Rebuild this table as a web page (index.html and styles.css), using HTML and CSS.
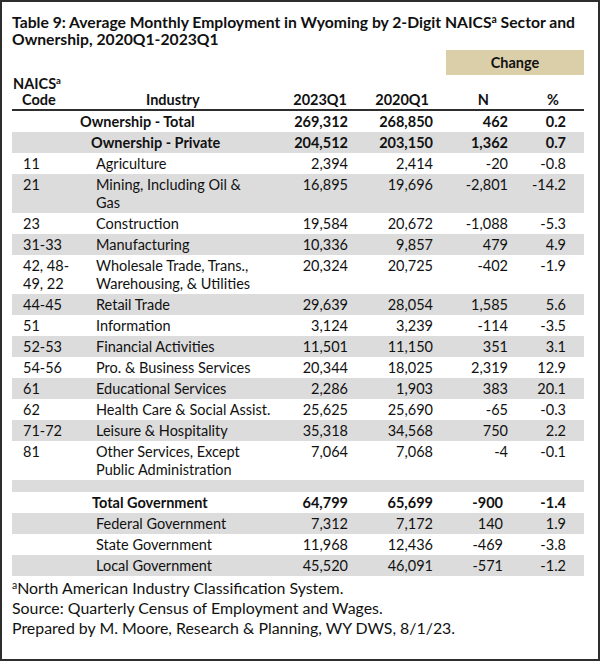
FILE: index.html
```html
<!DOCTYPE html>
<html>
<head>
<meta charset="utf-8">
<link rel="stylesheet" href="styles.css">
</head>
<body>
<div class="frame">
  <h1 class="title">Table 9: Average Monthly Employment in Wyoming by 2-Digit NAICS<sup>a</sup> Sector and<br>Ownership, 2020Q1-2023Q1</h1>
  <div class="change-row"><div class="change">Change</div></div>
  <table class="data">
    <colgroup>
      <col class="c-code"><col class="c-ind"><col class="c-a"><col class="c-b"><col class="c-n"><col class="c-p">
    </colgroup>
    <thead>
      <tr>
        <th class="h-code">NAICS<sup>a</sup><br><span class="h-code2">Code</span></th>
        <th class="h-ind">Industry</th>
        <th class="h-a">2023Q1</th>
        <th class="h-b">2020Q1</th>
        <th class="h-n">N</th>
        <th class="h-p">%</th>
      </tr>
    </thead>
    <tbody>
      <tr class="bold"><td colspan="2" class="own-total">Ownership - Total</td><td class="num">269,312</td><td class="num">268,850</td><td class="num">462</td><td class="num pct">0.2</td></tr>
      <tr class="bold band"><td colspan="2" class="own-private">Ownership - Private</td><td class="num">204,512</td><td class="num">203,150</td><td class="num">1,362</td><td class="num pct">0.7</td></tr>
      <tr><td class="code">11</td><td>Agriculture</td><td class="num">2,394</td><td class="num">2,414</td><td class="num">-20</td><td class="num pct">-0.8</td></tr>
      <tr class="band"><td class="code">21</td><td>Mining, Including Oil &amp;<br>Gas</td><td class="num">16,895</td><td class="num">19,696</td><td class="num">-2,801</td><td class="num pct">-14.2</td></tr>
      <tr><td class="code">23</td><td>Construction</td><td class="num">19,584</td><td class="num">20,672</td><td class="num">-1,088</td><td class="num pct">-5.3</td></tr>
      <tr class="band"><td class="code">31-33</td><td>Manufacturing</td><td class="num">10,336</td><td class="num">9,857</td><td class="num">479</td><td class="num pct">4.9</td></tr>
      <tr><td class="code">42, 48-<br>49, 22</td><td>Wholesale Trade, Trans.,<br>Warehousing, &amp; Utilities</td><td class="num">20,324</td><td class="num">20,725</td><td class="num">-402</td><td class="num pct">-1.9</td></tr>
      <tr class="band"><td class="code">44-45</td><td>Retail Trade</td><td class="num">29,639</td><td class="num">28,054</td><td class="num">1,585</td><td class="num pct">5.6</td></tr>
      <tr><td class="code">51</td><td>Information</td><td class="num">3,124</td><td class="num">3,239</td><td class="num">-114</td><td class="num pct">-3.5</td></tr>
      <tr class="band"><td class="code">52-53</td><td>Financial Activities</td><td class="num">11,501</td><td class="num">11,150</td><td class="num">351</td><td class="num pct">3.1</td></tr>
      <tr><td class="code">54-56</td><td>Pro. &amp; Business Services</td><td class="num">20,344</td><td class="num">18,025</td><td class="num">2,319</td><td class="num pct">12.9</td></tr>
      <tr class="band"><td class="code">61</td><td>Educational Services</td><td class="num">2,286</td><td class="num">1,903</td><td class="num">383</td><td class="num pct">20.1</td></tr>
      <tr><td class="code">62</td><td>Health Care &amp; Social Assist.</td><td class="num">25,625</td><td class="num">25,690</td><td class="num">-65</td><td class="num pct">-0.3</td></tr>
      <tr class="band"><td class="code">71-72</td><td>Leisure &amp; Hospitality</td><td class="num">35,318</td><td class="num">34,568</td><td class="num">750</td><td class="num pct">2.2</td></tr>
      <tr><td class="code">81</td><td>Other Services, Except<br>Public Administration</td><td class="num">7,064</td><td class="num">7,068</td><td class="num">-4</td><td class="num pct">-0.1</td></tr>
      <tr class="band spacer"><td colspan="6"></td></tr>
      <tr class="bold gov"><td colspan="2" class="gov-total">Total Government</td><td class="num">64,799</td><td class="num">65,699</td><td class="num n">-900</td><td class="num pct">-1.4</td></tr>
      <tr class="band gov"><td class="code"></td><td>Federal Government</td><td class="num">7,312</td><td class="num">7,172</td><td class="num n">140</td><td class="num pct">1.9</td></tr>
      <tr class="gov"><td class="code"></td><td>State Government</td><td class="num">11,968</td><td class="num">12,436</td><td class="num n">-469</td><td class="num pct">-3.8</td></tr>
      <tr class="band gov"><td class="code"></td><td>Local Government</td><td class="num">45,520</td><td class="num">46,091</td><td class="num n">-571</td><td class="num pct">-1.2</td></tr>
    </tbody>
  </table>
  <div class="notes">
    <p><sup>a</sup>North American Industry Classification System.</p>
    <p>Source: Quarterly Census of Employment and Wages.</p>
    <p>Prepared by M. Moore, Research &amp; Planning, WY DWS, 8/1/23.</p>
  </div>
</div>
</body>
</html>
```

FILE: styles.css
```css
html, body {
  margin: 0;
  padding: 0;
  background: #ffffff;
}
body {
  font-family: Lato, "Open Sans", sans-serif;
  color: #111111;
}
.frame {
  box-sizing: border-box;
  width: 600px;
  height: 661px;
  border: 2px solid #2e2e2e;
  padding: 12px 14px 0 10px;
}
.title {
  margin: 0;
  font-size: 15.7px;
  font-weight: 700;
  line-height: 17px;
  white-space: nowrap;
}
sup {
  font-size: 0.66em;
  line-height: 0;
  vertical-align: 0.5em;
}
.change-row {
  display: flex;
  justify-content: flex-end;
  margin-top: 2px;
}
.change {
  width: 138px;
  height: 25px;
  background: #dbcfa9;
  font-weight: 700;
  font-size: 14.5px;
  line-height: 25px;
  text-align: center;
}
.data {
  width: 572px;
  border-collapse: collapse;
  table-layout: fixed;
  font-size: 14.5px;
}
.c-code { width: 84px; }
.c-ind { width: 194px; }
.c-a { width: 58px; }
.c-b { width: 85px; }
.c-n { width: 75px; }
.c-p { width: 76px; }
th {
  font-weight: 700;
  line-height: 16px;
  padding: 1px 0 1px 0;
  vertical-align: bottom;
  border-bottom: 2px solid #2e2e2e;
  white-space: nowrap;
}
.h-code { text-align: left; padding-left: 1px; }
.h-code2 { padding-left: 9px; }
.h-ind { text-align: left; padding-left: 50px; }
.h-a { text-align: right; padding-right: 1px; }
.h-b { text-align: right; padding-right: 4px; }
.h-n { text-align: right; padding-right: 19px; }
.h-p { text-align: right; padding-right: 25px; }
td {
  padding: 1.5px 0;
  line-height: 18px;
  vertical-align: top;
  white-space: nowrap;
}
.band td { background: #dcdcdc; }
.bold td { font-weight: 700; }
.code { padding-left: 11px; }
.num { text-align: right; }
.pct { padding-right: 18px; }
.gov .n { padding-right: 5px; }
.own-total { padding-left: 68px; }
.own-private { padding-left: 79px; }
.gov-total { padding-left: 80px; }
.spacer td { height: 12px; padding: 0; line-height: 0; }
.notes {
  margin-top: 2px;
  font-size: 15.9px;
  line-height: 20px;
}
.notes p { margin: 0; }
```
